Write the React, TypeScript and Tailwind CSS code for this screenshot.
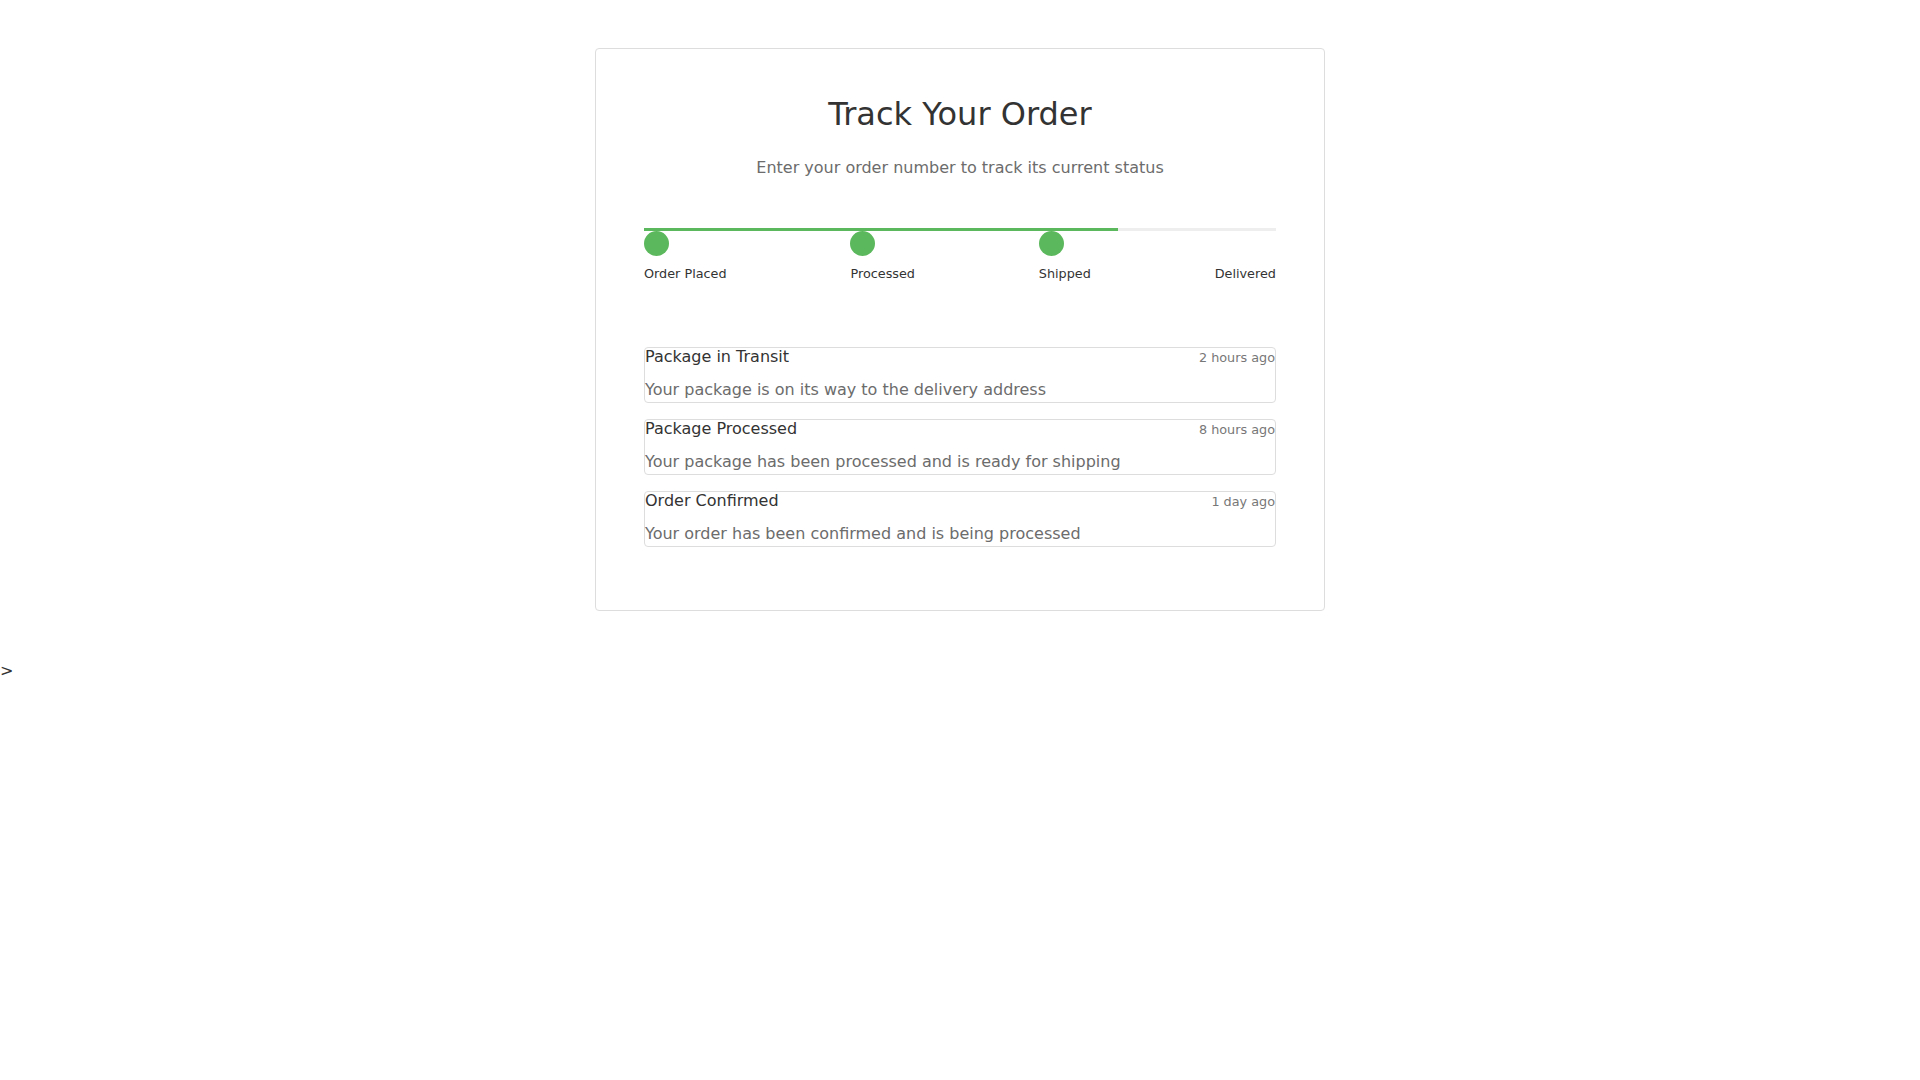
import React from "react";

const steps = [
  { label: "Order Placed", done: true },
  { label: "Processed", done: true },
  { label: "Shipped", done: true },
  { label: "Delivered", done: false },
];

const events = [
  { title: "Package in Transit", time: "2 hours ago", body: "Your package is on its way to the delivery address" },
  { title: "Package Processed", time: "8 hours ago", body: "Your package has been processed and is ready for shipping" },
  { title: "Order Confirmed", time: "1 day ago", body: "Your order has been confirmed and is being processed" },
];

export default function App() {
  return (
    <div className="min-h-screen bg-white text-[#333]" style={{ fontFamily: '"DejaVu Sans", sans-serif' }}>
      <div className="mx-auto mt-12 mb-12 w-[730px] rounded-[4px] border border-[#ddd] px-12 pt-[47px] pb-[63px]">
        <h1 className="text-center text-[32px] leading-[37px] font-normal text-[#333]">Track Your Order</h1>
        <p className="mt-[23px] text-center text-base leading-6 text-[#6c6c6c]">
          Enter your order number to track its current status
        </p>
        <div className="mt-[48px]">
          <div className="h-[3px] bg-[#eee]">
            <div className="h-full w-3/4 bg-[#5cb85c]" />
          </div>
          <div className="flex justify-between">
            {steps.map((s) => (
              <div key={s.label} className="flex flex-col">
                <div className={s.done ? "h-[25px] w-[25px] rounded-full bg-[#5cb85c]" : "h-[25px] w-[25px] rounded-full bg-transparent"} />
                <div className="mt-[8px] text-[12.8px] leading-[19px] text-[#333]">{s.label}</div>
              </div>
            ))}
          </div>
        </div>
        <div className="mt-[64px] flex flex-col gap-4">
          {events.map((e) => (
            <div key={e.title} className="rounded-[4px] border border-[#ddd]">
              <div className="flex h-[18px] items-baseline justify-between">
                <span className="text-base leading-[18px] text-[#333]">{e.title}</span>
                <span className="text-[12.8px] leading-[18px] text-[#777]">{e.time}</span>
              </div>
              <p className="mt-[12px] text-base leading-6 text-[#6c6c6c]">{e.body}</p>
            </div>
          ))}
        </div>
      </div>
      <div className="text-base leading-6 text-[#333]">&gt;</div>
    </div>
  );
}
